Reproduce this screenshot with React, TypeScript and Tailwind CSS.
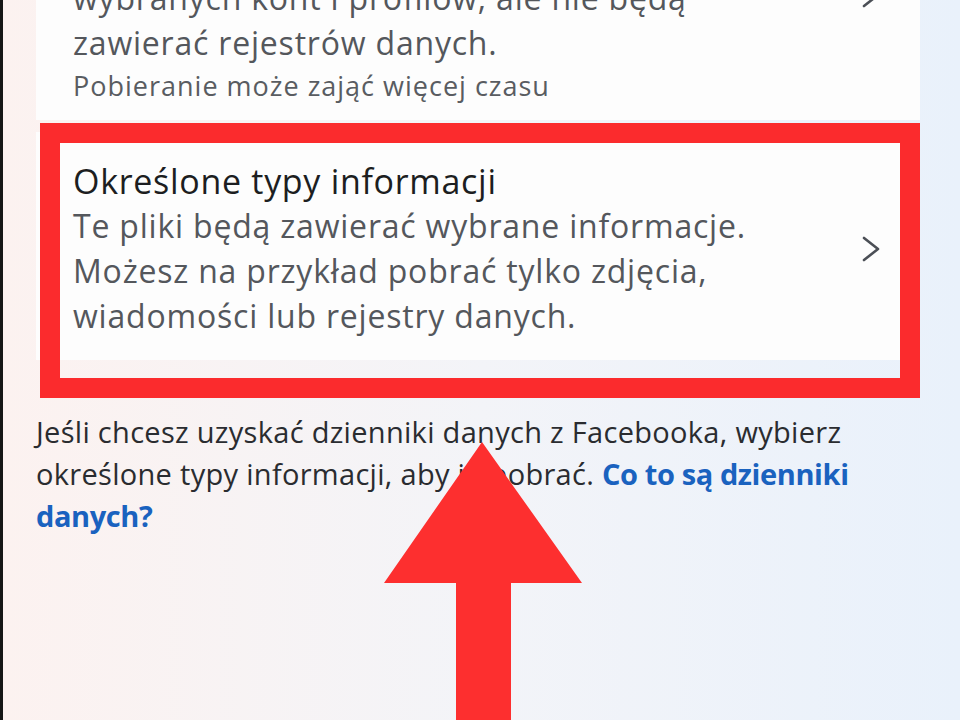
import React from "react";

function Chevron({ className = "" }: { className?: string }) {
  return (
    <svg
      aria-hidden
      viewBox="0 0 18 26"
      className={className}
      fill="none"
      stroke="#4b4f56"
      strokeWidth="2.6"
      strokeLinecap="round"
      strokeLinejoin="round"
    >
      <path d="M2 2 L16 13 L2 24" />
    </svg>
  );
}

export default function App() {
  return (
    <div
      className="relative h-[720px] w-[960px] overflow-hidden border-l-[3px] border-[#161616] bg-gradient-to-r from-[#fcf2f0] via-[#f3f4f8] to-[#e9f1fb]"
      style={{ fontFamily: '"Open Sans", "Noto Sans", sans-serif' }}
    >
      <div className="flex flex-col pl-[33px]">
        {/* card cut off by the top edge */}
        <div className="-mt-[25px] flex w-[884px] bg-[#fdfdfd] pb-[13px] pl-[37px]">
          <div className="flex-1">
            <p className="text-[32px] leading-[45px] tracking-[0.8px] text-[#54575c]">
              wybranych kont i profilów, ale nie będą
            </p>
            <p className="text-[32px] leading-[45px] tracking-[0.8px] text-[#54575c]">
              zawierać rejestrów danych.
            </p>
            <p className="text-[27px] leading-[42px] tracking-[1px] text-[#595c61]">
              Pobieranie może zająć więcej czasu
            </p>
          </div>
          <Chevron className="mr-[40px] mt-[7px] h-[26px] w-[18px] shrink-0" />
        </div>

        <div className="mt-[12px] flex w-[884px] items-center bg-[#fdfdfd] pb-[22px] pl-[37px] pt-[27px]">
          <div className="flex-1">
            <h2 className="text-[34px] font-medium leading-[44px] tracking-[0.7px] text-[#1c1e21]">
              Określone typy informacji
            </h2>
            <p className="text-[32px] leading-[45px] tracking-[0.8px] text-[#54575c]">
              Te pliki będą zawierać wybrane informacje.
              <br />
              Możesz na przykład pobrać tylko zdjęcia,
              <br />
              wiadomości lub rejestry danych.
            </p>
          </div>
          <Chevron className="mr-[40px] h-[26px] w-[18px] shrink-0" />
        </div>

        <p className="mt-[51px] w-[850px] text-[29px] leading-[42px] tracking-[0.3px] text-[#2a2c30]">
          Jeśli chcesz uzyskać dzienniki danych z Facebooka, wybierz
          <br />
          określone typy informacji, aby je pobrać.{" "}
          <a className="font-bold tracking-[-0.4px] text-[#1a62bf]">Co to są dzienniki danych?</a>
        </p>
      </div>

      {/* annotation: red frame */}
      <div className="pointer-events-none absolute left-[37px] top-[123px] h-[275px] w-[880px] border-[20px] border-[#fb2b2d]" />

      {/* annotation: red arrow */}
      <svg
        aria-hidden
        className="pointer-events-none absolute left-[373px] top-[438px]"
        width="210"
        height="290"
        viewBox="0 0 210 290"
      >
        <path d="M106 4 L206 145 L135 145 L135 290 L80 290 L80 145 L8 145 Z" fill="#fd2f2f" />
      </svg>
    </div>
  );
}
